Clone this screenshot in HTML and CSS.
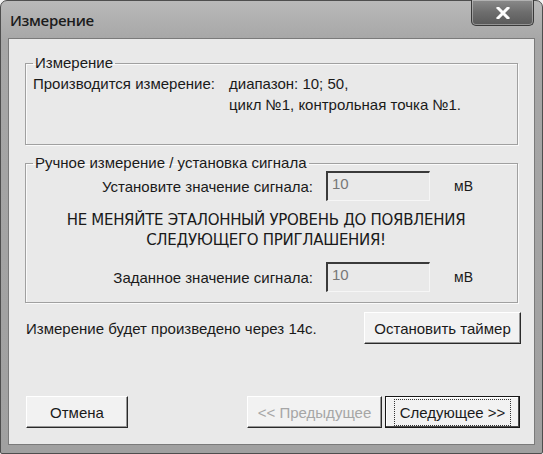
FILE: index.html
```html
<!DOCTYPE html>
<html lang="ru">
<head>
<meta charset="utf-8">
<title>Измерение</title>
<link rel="stylesheet" href="styles.css">
</head>
<body>
<div class="window">
  <div class="titlebar">
    <span class="title">Измерение</span>
    <button class="close" aria-label="Закрыть">
      <svg width="14" height="12" viewBox="0 0 14 12"><path d="M2 1 L12 11 M12 1 L2 11" stroke="#fff" stroke-width="3" stroke-linecap="square"/></svg>
    </button>
  </div>
  <div class="client">
    <fieldset class="group group-info">
      <legend>Измерение</legend>
      <div class="info-grid">
        <span>Производится измерение:</span>
        <span>диапазон: 10; 50,</span>
        <span></span>
        <span>цикл №1, контрольная точка №1.</span>
      </div>
    </fieldset>
    <fieldset class="group group-manual">
      <legend>Ручное измерение / установка сигнала</legend>
      <div class="field-row">
        <span class="field-label">Установите значение сигнала:</span>
        <div class="field-input">10</div>
        <span class="unit">мВ</span>
      </div>
      <p class="warning">НЕ МЕНЯЙТЕ ЭТАЛОННЫЙ УРОВЕНЬ ДО ПОЯВЛЕНИЯ<br>СЛЕДУЮЩЕГО ПРИГЛАШЕНИЯ!</p>
      <div class="field-row">
        <span class="field-label">Заданное значение сигнала:</span>
        <div class="field-input">10</div>
        <span class="unit">мВ</span>
      </div>
    </fieldset>
    <div class="timer-row">
      <span>Измерение будет произведено через 14с.</span>
      <button class="btn btn-timer">Остановить таймер</button>
    </div>
    <div class="nav-row">
      <button class="btn btn-cancel">Отмена</button>
      <div class="nav-right">
        <button class="btn btn-prev" disabled>&lt;&lt; Предыдущее</button>
        <button class="btn btn-next"><span class="focus">Следующее &gt;&gt;</span></button>
      </div>
    </div>
  </div>
</div>
</body>
</html>
```
FILE: styles.css
```css
html, body {
  margin: 0;
  padding: 0;
  background: #f2f2f2;
}

.window {
  box-sizing: border-box;
  width: 543px;
  height: 454px;
  border: 1px solid #4e4e4e;
  border-radius: 7px 7px 2px 2px;
  background: linear-gradient(#b9b9b9, #a6a6a6 40px, #a0a0a0);
  padding: 0 7px 8px 7px;
  display: flex;
  flex-direction: column;
  font-family: "Liberation Sans", Arial, sans-serif;
  color: #1a1a1a;
}

.titlebar {
  height: 37px;
  display: flex;
  justify-content: space-between;
  align-items: flex-start;
  flex: none;
}

.title {
  font-family: "Open Sans", "Noto Sans", sans-serif;
  font-size: 15px;
  font-weight: 600;
  color: #1c1c1c;
  padding: 9px 0 0 2px;
  letter-spacing: -0.3px;
}

.close {
  width: 63px;
  height: 26px;
  margin: -1px 1px 0 0;
  border: 1px solid #3a3a3a;
  border-top: none;
  border-radius: 0 0 5px 5px;
  background: linear-gradient(#8a8a8a, #6d6d6d 50%, #5a5a5a);
  box-shadow: inset 0 0 0 1px rgba(255,255,255,0.35);
  display: flex;
  align-items: center;
  justify-content: center;
  padding: 0;
}

.client {
  flex: 1;
  background: #e9e9e9;
  border: 1px solid #7a7a7a;
  padding: 16px 16px 0 16px;
  display: flex;
  flex-direction: column;
  font-size: 15px;
}

.group {
  margin: 0;
  border: 1px solid #a0a0a0;
  box-shadow: 1px 1px 0 #fafafa, inset 1px 1px 0 #fafafa;
  padding: 0 8px 0 7px;
  min-width: 0;
}

.group legend {
  padding: 0 2px;
  font-size: 15px;
  line-height: 16px;
  color: #1a1a1a;
}

.group-info {
  height: 90px;
  box-sizing: border-box;
}

.info-grid {
  display: grid;
  grid-template-columns: 196px auto;
  line-height: 21px;
  margin-top: 2px;
}

.group-manual {
  margin-top: 10px;
  height: 148px;
  box-sizing: border-box;
  padding-top: 0;
}

.field-row {
  display: grid;
  grid-template-columns: 281px 104px auto;
  align-items: center;
  column-gap: 12px;
}

.field-label {
  text-align: right;
  padding-right: 1px;
}

.field-input {
  height: 30px;
  box-sizing: border-box;
  border-top: 2px solid #3a3a3a;
  border-left: 2px solid #3a3a3a;
  border-right: 1px solid #f6f6f6;
  border-bottom: 1px solid #f6f6f6;
  padding: 1px 0 0 4px;
  color: #777;
  line-height: 20px;
}

.unit {
  padding-left: 12px;
  font-size: 14px;
}

.warning {
  margin: 9px 0 12px 0;
  text-align: center;
  font-family: "DejaVu Sans", "Liberation Sans", sans-serif;
  font-size: 15px;
  line-height: 20px;
  letter-spacing: -0.3px;
  padding-right: 10px;
  color: #1a1a1a;
}

.timer-row {
  display: flex;
  justify-content: space-between;
  align-items: center;
  margin-top: 9px;
  margin-right: -3px;
  padding-left: 1px;
}

.btn {
  font-family: "Liberation Sans", Arial, sans-serif;
  font-size: 15px;
  color: #1a1a1a;
  background: #f2f2f2;
  border: 1px solid;
  border-color: #ffffff #2a2a2a #2a2a2a #ffffff;
  box-shadow: inset -1px -1px 0 #979797;
  height: 32px;
  padding: 0;
  border-radius: 0;
}

.btn-timer {
  width: 157px;
}

.nav-row {
  display: flex;
  justify-content: space-between;
  align-items: center;
  margin-top: 52px;
  margin-right: -2px;
  padding-left: 1px;
}

.nav-right {
  display: flex;
  gap: 3px;
}

.btn-cancel {
  width: 102px;
}

.btn-prev {
  width: 135px;
  color: #a6a6a6;
}

.btn-next {
  width: 135px;
  border: 1px solid #161616;
  box-shadow: inset -1px -1px 0 #4a4a4a, inset 1px 1px 0 #ffffff;
  display: flex;
  align-items: center;
  justify-content: center;
}

.focus {
  border: 1px dotted #333;
  padding: 4px 5px;
}
```
